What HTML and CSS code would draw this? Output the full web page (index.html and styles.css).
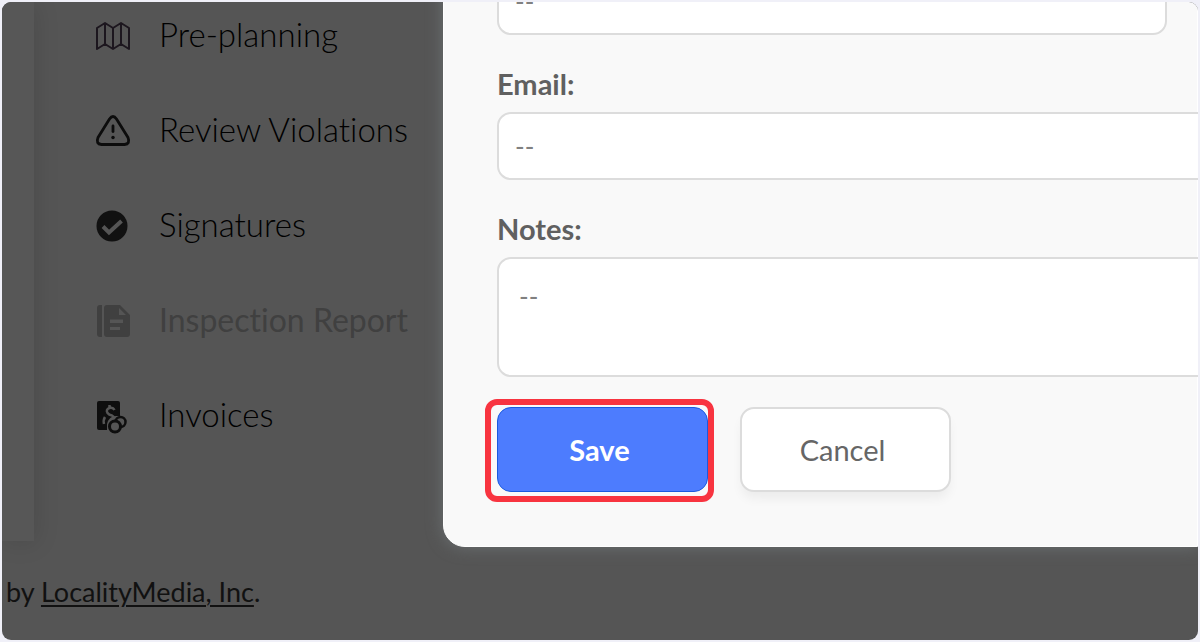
FILE: index.html
```html
<!DOCTYPE html>
<html lang="en">
<head>
    <meta charset="UTF-8">
    <meta name="viewport" content="width=device-width, initial-scale=1.0">
    <title>Inspection - Contact</title>
    <link rel="stylesheet" href="styles.css">
</head>
<body>

<div class="screen">
    <div class="sidebar">
        <div class="sidebar-top">
            <div class="panel-edge"></div>
            <nav class="menu">
                <a class="menu-item" href="#">
                    <svg class="icon" viewBox="0 0 36 36" fill="none" stroke="#1c161e" stroke-width="2" stroke-linejoin="round">
                        <path d="M2 10 L10 5 L18 10 L26 5 L34 10 V31 L26 26 L18 31 L10 26 L2 31 Z"/>
                        <path d="M10 5 V26 M18 10 V31 M26 5 V26"/>
                    </svg>
                    <span>Pre-planning</span>
                </a>
                <a class="menu-item" href="#">
                    <svg class="icon" viewBox="0 0 36 36" fill="none" stroke="#0c0c0c" stroke-width="2.800" stroke-linecap="round" stroke-linejoin="round">
                        <path d="M14.500 6 Q18 1 21.500 6 L33 24.500 Q35.500 31 29.500 31.500 H6.500 Q.5 31 3 24.500 Z"/>
                        <path d="M18 13 V18.500"/>
                        <path d="M18 24.500 V24.600" stroke-width="3.500"/>
                    </svg>
                    <span>Review Violations</span>
                </a>
                <a class="menu-item" href="#">
                    <svg class="icon" viewBox="0 0 36 36">
                        <circle cx="17" cy="18" r="15.500" fill="#111"/>
                        <path d="M8 18.500 L14 24.500 L26.500 13" fill="none" stroke="#555" stroke-width="4"/>
                    </svg>
                    <span>Signatures</span>
                </a>
                <a class="menu-item disabled" href="#">
                    <svg class="icon" viewBox="0 0 36 36">
                        <path fill="#404040" d="M5 2 H7 V34 H5 Q2 34 2 31 V5 Q2 2 5 2 Z"/>
                        <path fill="#404040" fill-rule="evenodd" d="M12 2 H25 L35 12 V31 Q35 34 32 34 H12 Q9 34 9 31 V5 Q9 2 12 2 Z M24 5 V12 H31 Z M15 16.500 H28 V20 H15 Z M15 24 H25 V27 H15 Z"/>
                    </svg>
                    <span>Inspection Report</span>
                </a>
                <a class="menu-item" href="#">
                    <svg class="icon" viewBox="0 0 36 36">
                        <path fill="#0e0e0e" d="M4 3 H23 Q25 3 25 5 V32 H4 Q2 32 2 30 V5 Q2 3 4 3 Z"/>
                        <path d="M19.500 12 Q18 9 14.500 10 Q10.500 11.500 12.500 15 Q14 17 17 17.500 Q20 19 18.500 22 M14.500 7 V10 M10 19 Q8 22 9 26" fill="none" stroke="#555" stroke-width="2.500"/>
                        <path fill="#555" d="M12 33 V26 Q14 18 21 18 H26 V33 Z"/>
                        <circle cx="25.500" cy="24" r="5" fill="none" stroke="#0e0e0e" stroke-width="2.500"/>
                        <circle cx="20" cy="28.500" r="5.500" fill="#555" stroke="#0e0e0e" stroke-width="3"/>
                    </svg>
                    <span>Invoices</span>
                </a>
            </nav>
        </div>
        <p class="footer">by <a href="#">LocalityMedia, Inc</a>.</p>
    </div>

    <form class="modal">
        <input class="field field-short" type="text" placeholder="--" aria-label="Phone">
        <label for="email">Email:</label>
        <input class="field" id="email" type="text" placeholder="--">
        <label for="notes">Notes:</label>
        <textarea class="field field-notes" id="notes" placeholder="--"></textarea>
        <div class="buttons">
            <div class="highlight">
                <button class="btn btn-save" type="button">Save</button>
            </div>
            <button class="btn btn-cancel" type="button">Cancel</button>
        </div>
    </form>
</div>

</body>
</html>
```

FILE: styles.css
```css
* {
    margin: 0;
    padding: 0;
    box-sizing: border-box;
}

body {
    padding: 2px;
    background-color: #f0f0f8;
    font-family: Lato, "Liberation Sans", sans-serif;
    font-variant-ligatures: none;
}

.screen {
    display: flex;
    align-items: flex-start;
    min-height: calc(100vh - 4px);
    background-color: #555;
    border-radius: 9px;
    overflow: hidden;
}

.sidebar {
    flex: none;
    width: 441px;
}

.sidebar-top {
    display: flex;
    height: 539px;
}

.panel-edge {
    width: 32px;
    background-color: #575757;
    box-shadow: 2px 2px 24px rgba(0, 0, 0, 0.12);
}

.menu {
    padding-left: 61px;
}

.menu-item {
    display: flex;
    align-items: center;
    gap: 28px;
    height: 68px;
    margin-bottom: 27px;
    font-size: 33px;
    font-weight: 300;
    color: #000;
    text-decoration: none;
    white-space: nowrap;
}

.menu-item span {
    padding-bottom: 4px;
}

.menu-item.disabled {
    color: #404040;
    font-size: 32px;
    font-weight: 400;
}

.icon {
    flex: none;
    width: 36px;
    height: 36px;
}

.footer {
    padding: 34px 0 0 4px;
    font-size: 27px;
    line-height: 34px;
    color: #111;
}

.footer a {
    color: #111;
    text-decoration-thickness: 2px;
    text-underline-offset: 3px;
}

.modal {
    flex: 1;
    margin-top: -36px;
    padding: 0 0 54px 53px;
    background-color: #f9f9f9;
    border: 1px solid #fff;
    border-radius: 0 0 0 22px;
    box-shadow: 0 0 16px #6c7173;
}

.modal label {
    display: block;
    margin: 32px 0 11px;
    font-size: 29px;
    font-weight: 700;
    line-height: 34px;
    color: #606060;
}

.field {
    display: block;
    width: calc(100% + 24px);
    height: 68px;
    padding: 0 16px;
    background-color: #fff;
    border: 2px solid #dcdcdc;
    border-radius: 14px;
    font-family: inherit;
    font-size: 26px;
    color: #555;
}

.field::placeholder {
    color: #808080;
}

.field-short {
    width: calc(100% - 30px);
}

.field-notes {
    height: 120px;
    padding: 20px;
    line-height: 34px;
    resize: none;
}

.buttons {
    display: flex;
    gap: 32px;
    margin-top: 30px;
}

.btn {
    width: 211px;
    height: 85px;
    padding-right: 6px;
    border-radius: 14px;
    font-family: inherit;
    font-size: 29px;
}

.btn-save {
    display: block;
    background-color: #4d7cfe;
    border: 1px solid #1a5ae0;
    color: #fff;
    font-weight: 700;
}

.btn-cancel {
    background-color: #fff;
    border: 2px solid #dcdcdc;
    box-shadow: 0 8px 12px -2px rgba(0, 0, 0, 0.06);
    color: #666;
}

.highlight {
    position: relative;
}

.highlight::after {
    content: "";
    position: absolute;
    top: -8px;
    right: -6px;
    bottom: -10px;
    left: -12px;
    border: 6px solid #f83440;
    border-radius: 12px;
}
```
